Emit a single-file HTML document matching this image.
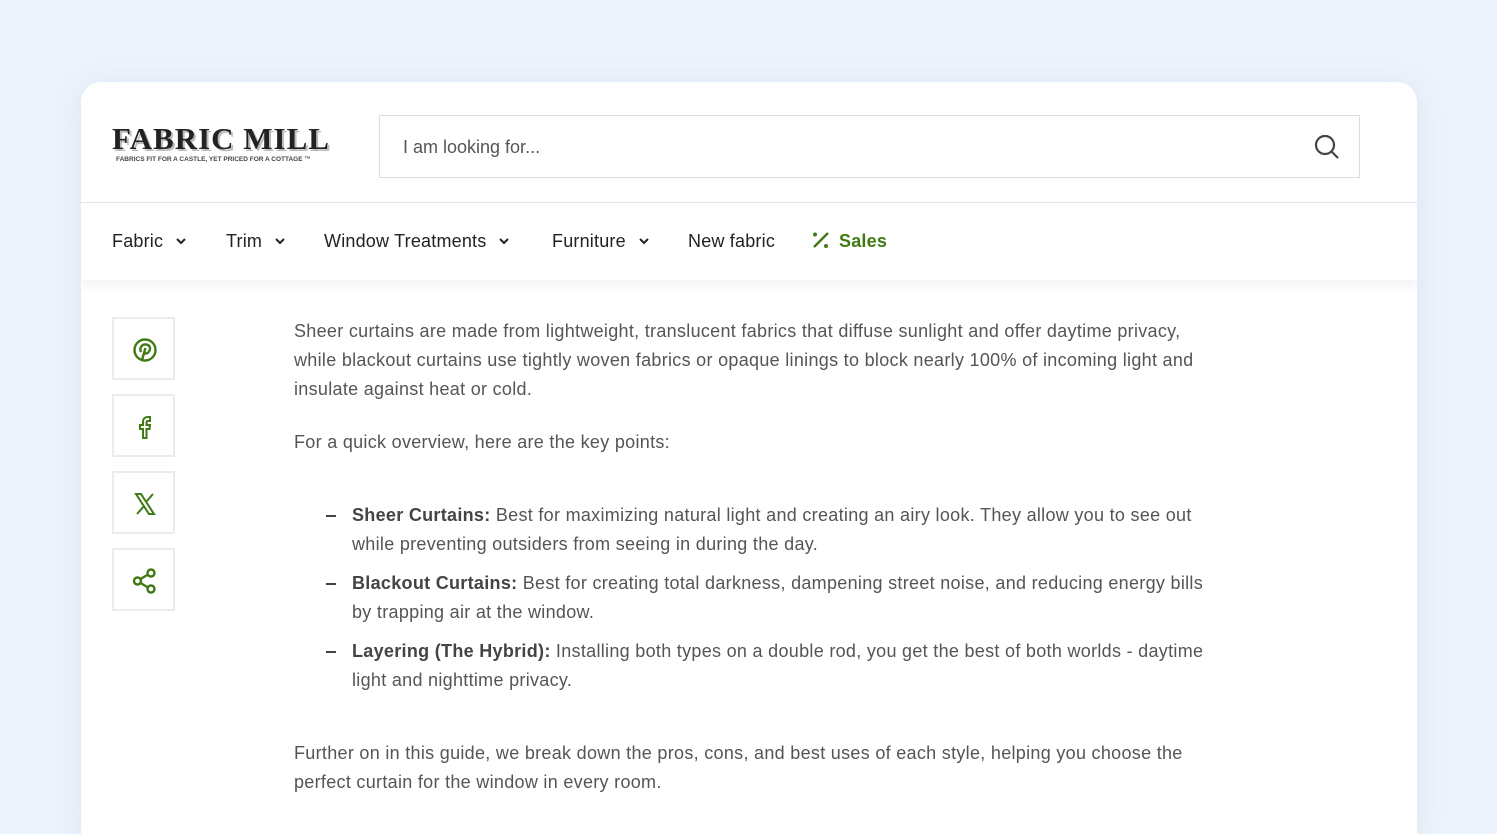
<!DOCTYPE html>
<html><head><meta charset="utf-8"><style>
*{margin:0;padding:0;box-sizing:border-box}
html,body{width:1497px;height:834px;overflow:hidden}
body{background:#edf3fc;font-family:"Liberation Sans",Arial,sans-serif;position:relative}
.card{position:absolute;left:81px;top:82px;width:1336px;height:752px;background:#fff;border-radius:20px 20px 0 0;box-shadow:0 4px 30px rgba(120,140,180,.15);overflow:hidden}
.head{height:121px;border-bottom:1px solid #e3e3e3;position:relative}
.logo{position:absolute;left:31px;top:40px;font-family:"Liberation Serif",serif;font-weight:bold;font-size:31px;letter-spacing:1px;color:#222;text-shadow:2px 2px 0 #bbb;line-height:34px}
.tag{position:absolute;left:35px;top:74px;font-size:6.5px;color:#444;font-weight:bold;white-space:nowrap}
.search{position:absolute;left:298px;top:33px;width:981px;height:63px;border:1px solid #ddd;}
.search span{position:absolute;left:23px;top:21px;font-size:18px;color:#555}
.search svg{position:absolute;right:18px;top:17px}
.nav{height:77px;position:relative;box-shadow:0 6px 10px rgba(0,0,0,.05)}
.nav div{position:absolute;top:28px;font-size:18px;color:#222;white-space:nowrap;letter-spacing:.2px}
.nav svg.c{margin-left:13px;vertical-align:2px}
.share{position:absolute;left:31px;width:63px;height:63px;border:2px solid #ececec}
.share svg{position:absolute;left:18px;top:18px}
.txt{position:absolute;left:213px;width:915px;font-size:18px;line-height:29px;color:#555;letter-spacing:.3px}
.li{position:absolute;left:271px;width:860px;font-size:18px;line-height:29px;color:#555;letter-spacing:.3px}
.li b{color:#444}
.li:before{content:"";position:absolute;left:-26px;top:14px;width:10px;height:2px;background:#444}
</style></head><body>
<div class="card">
<div class="head">
<div class="logo">FABRIC MILL</div>
<div class="tag">FABRICS FIT FOR A CASTLE, YET PRICED FOR A COTTAGE ™</div>
<div class="search"><span>I am looking for...</span>
<svg width="28" height="28" viewBox="0 0 28 28" fill="none" stroke="#444" stroke-width="2.2"><circle cx="12" cy="12" r="9"/><path d="M18.5 18.5L25 25"/></svg></div>
</div>
<div class="nav">
<div style="left:31px">Fabric<svg class="c" width="10" height="7" viewBox="0 0 10 7"><path d="M1 1l4 4 4-4" stroke="#222" stroke-width="2" fill="none"/></svg></div>
<div style="left:145px">Trim<svg class="c" width="10" height="7" viewBox="0 0 10 7"><path d="M1 1l4 4 4-4" stroke="#222" stroke-width="2" fill="none"/></svg></div>
<div style="left:243px">Window Treatments<svg class="c" width="10" height="7" viewBox="0 0 10 7"><path d="M1 1l4 4 4-4" stroke="#222" stroke-width="2" fill="none"/></svg></div>
<div style="left:471px">Furniture<svg class="c" width="10" height="7" viewBox="0 0 10 7"><path d="M1 1l4 4 4-4" stroke="#222" stroke-width="2" fill="none"/></svg></div>
<div style="left:607px">New fabric</div>
<div style="left:730px;color:#3f7a12;font-weight:bold"><svg width="20" height="18" viewBox="0 0 20 18" style="vertical-align:-2px;margin-right:8px"><circle cx="4" cy="3.5" r="2" fill="#3f7a12"/><circle cx="15" cy="15" r="2" fill="#3f7a12"/><path d="M17 2L3 16" stroke="#3f7a12" stroke-width="2.4"/></svg>Sales</div>
</div>
<div class="share" style="top:235px"><svg width="26" height="26" viewBox="0 0 26 26" fill="none" stroke="#3f7a12" stroke-width="2.4"><circle cx="13" cy="13" r="10.5"/><path d="M10 23l3.5-12"/><path d="M9 15c-2-4 1-8 5-7.5s5 4 3 7-4 2-4.5 1"/></svg></div>
<div class="share" style="top:312px"><svg width="26" height="26" viewBox="0 0 26 26" fill="none" stroke="#3f7a12" stroke-width="2"><path d="M11 24V15H8V11h3V8c0-3 2-5 5-5h2v4h-2c-1 0-1.5.5-1.5 1.5V11h3.5l-.5 4h-3v9z"/></svg></div>
<div class="share" style="top:389px"><svg width="26" height="26" viewBox="0 0 26 26" fill="none" stroke="#3f7a12" stroke-width="2"><path d="M4 3h5l13 20h-5zM21 3L14 11M5 23l7-8"/></svg></div>
<div class="share" style="top:466px"><svg width="26" height="26" viewBox="0 0 26 26" fill="none" stroke="#3f7a12" stroke-width="2.4"><circle cx="5.5" cy="13" r="3.5"/><circle cx="19" cy="5" r="3.5"/><circle cx="19" cy="21" r="3.5"/><path d="M8.5 11l7.5-4.5M8.5 15l7.5 4.5"/></svg></div>
<div class="txt" style="top:235px">Sheer curtains are made from lightweight, translucent fabrics that diffuse sunlight and offer daytime privacy, while blackout curtains use tightly woven fabrics or opaque linings to block nearly 100% of incoming light and insulate against heat or cold.</div>
<div class="txt" style="top:346px">For a quick overview, here are the key points:</div>
<div class="li" style="top:419px"><b>Sheer Curtains:</b> Best for maximizing natural light and creating an airy look. They allow you to see out while preventing outsiders from seeing in during the day.</div>
<div class="li" style="top:487px"><b>Blackout Curtains:</b> Best for creating total darkness, dampening street noise, and reducing energy bills by trapping air at the window.</div>
<div class="li" style="top:555px"><b>Layering (The Hybrid):</b> Installing both types on a double rod, you get the best of both worlds - daytime light and nighttime privacy.</div>
<div class="txt" style="top:657px">Further on in this guide, we break down the pros, cons, and best uses of each style, helping you choose the perfect curtain for the window in every room.</div>
</div>
</body></html>
